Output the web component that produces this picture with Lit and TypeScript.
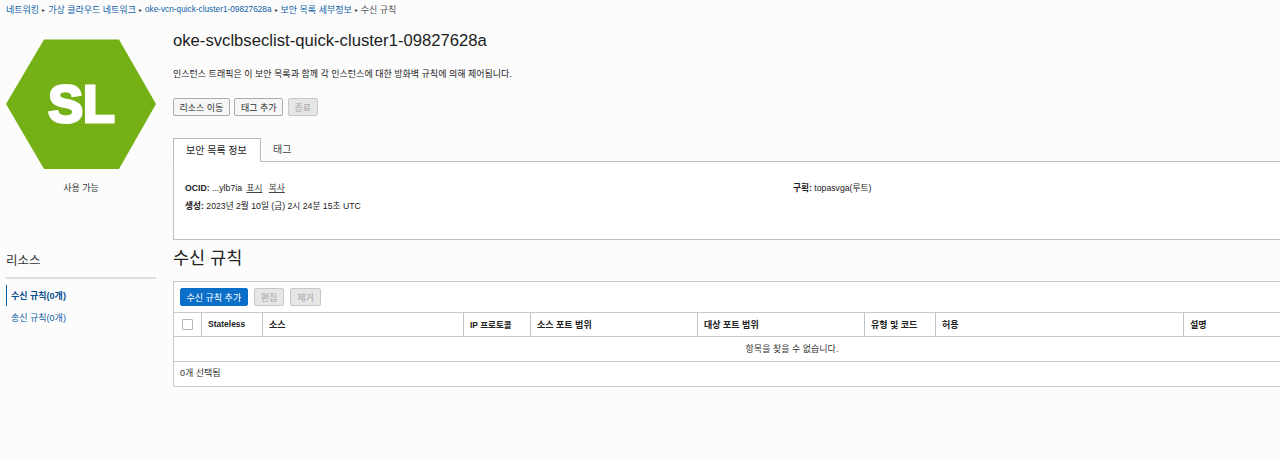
import { LitElement, html, css } from "lit";
import { customElement } from "lit/decorators.js";

const columns = [
  { label: "", width: 28 },
  { label: "Stateless", width: 61, cls: "latin" },
  { label: "소스", width: 201 },
  { label: "IP 프로토콜", width: 67, cls: "latin" },
  { label: "소스 포트 범위", width: 167 },
  { label: "대상 포트 범위", width: 167 },
  { label: "유형 및 코드", width: 71 },
  { label: "허용", width: 248 },
  { label: "설명", width: 227 },
];

@customElement("app-root")
export class AppRoot extends LitElement {
  static styles = css`
    :host {
      display: block;
      width: 1280px;
      height: 460px;
      overflow: hidden;
      background: #fcfcfc;
      color: #222;
      font-family: "Liberation Sans", "Noto Sans CJK KR", sans-serif;
      font-size: 9px;
    }
    .crumbs {
      display: flex;
      align-items: center;
      height: 19px;
      padding-left: 6px;
      gap: 3px;
      color: #555;
    }
    .crumbs a { color: #0f5ea8; }
    .crumbs a.id { font-size: 8.25px; }
    .crumbs .sep { font-size: 6px; color: #444; }
    .page { display: flex; }
    .side { width: 173px; flex: none; box-sizing: border-box; padding: 20px 17px 0 6px; }
    .hex { display: block; width: 150px; height: 130px; }
    .status { text-align: center; margin-top: 14px; height: 10px; line-height: 10px; color: #333; }
    .res-title { margin-top: 60px; font-size: 12.5px; line-height: 16px; color: #333; }
    .res-line { height: 2px; background: #dcdee2; margin: 8px 0 6px; }
    .nav { display: flex; flex-direction: column; gap: 1px; }
    .nav a {
      display: flex;
      align-items: center;
      height: 21px;
      padding-left: 5px;
      color: #0f5ea8;
    }
    .nav a.on {
      box-shadow: inset 1px 0 0 #0f5ea8;
      font-weight: 700;
      color: #0b4f91;
    }
    .main { width: 1238px; flex: none; }
    h1 {
      margin: 12px 0 0;
      font-size: 16.67px;
      line-height: 20px;
      font-weight: 400;
      color: #1c1c1c;
    }
    .desc { margin-top: 17px; line-height: 12px; color: #222; }
    .btns { display: flex; }
    .top-btns { margin-top: 18px; gap: 4.5px; }
    .btn {
      display: flex;
      align-items: center;
      justify-content: center;
      box-sizing: border-box;
      height: 18px;
      padding: 0 5.5px;
      border: 1px solid #a9abae;
      border-radius: 2px;
      background: #f6f6f6;
      color: #333;
      font: inherit;
    }
    .btn.off { background: #e6e6e6; border-color: #c6c8cb; color: #a5a5a5; padding: 0 6px; }
    .btn.primary { background: #0b6fca; border-color: #0b6fca; color: #fff; }
    .tabs { display: flex; margin-top: 22px; height: 24px; font-size: 10px; }
    .tab { display: flex; align-items: center; color: #444; padding: 0 0 4px 12px; box-sizing: border-box; }
    .tab.on {
      width: 88px;
      background: #fff;
      border: 1px solid #b9bbbe;
      border-bottom: none;
      padding-bottom: 3px;
      color: #222;
      position: relative;
      z-index: 1;
    }
    .panel {
      box-sizing: border-box;
      height: 79px;
      margin-top: -1px;
      background: #fff;
      border: 1px solid #bdbfc2;
      padding: 20px 11px 0;
      display: grid;
      grid-template-columns: 608px 1fr;
      grid-auto-rows: 18px;
      line-height: 12px;
      font-size: 8.7px;
      color: #222;
    }
    .panel b { font-weight: 700; }
    .panel u { color: #444; margin-left: 2px; }
    .panel u + u { margin-left: 4px; }
    h2 {
      margin: 7px 0 0;
      font-size: 17.5px;
      line-height: 22px;
      padding-bottom: 2px;
      font-weight: 400;
      color: #222;
    }
    .card {
      margin-top: 10px;
      background: #fff;
      border: 1px solid #c8cacd;
    }
    .bar { display: flex; gap: 6px; height: 30px; align-items: center; padding: 0 6px; box-sizing: border-box; }
    .row {
      display: flex;
      box-sizing: border-box;
      height: 25px;
      padding-bottom: 1px;
      border-top: 1px solid #c8cacd;
    }
    .row.head { height: 24px; padding-bottom: 0; }
    .th {
      box-sizing: border-box;
      flex: none;
      display: flex;
      align-items: center;
      padding: 0 0 1px 6px;
      font-weight: 700;
      color: #222;
      border-right: 1px solid #c0c2c6;
    }
    .th.latin { font-size: 8.5px; }
    .th:first-child { justify-content: center; padding: 0; }
    .th:last-child { border-right: none; }
    .box {
      width: 9px;
      height: 9px;
      border: 1px solid #b5b7ba;
      border-radius: 1px;
      background: #fff;
    }
    .empty { justify-content: center; align-items: center; color: #333; }
    .foot { align-items: center; padding: 0 0 3px 6px; color: #333; }
  `;

  render() {
    return html`
      <div class="crumbs">
        <a>네트워킹</a><span class="sep">▸</span>
        <a>가상 클라우드 네트워크</a><span class="sep">▸</span>
        <a class="id">oke-vcn-quick-cluster1-09827628a</a><span class="sep">▸</span>
        <a>보안 목록 세부정보</a><span class="sep">▸</span>
        <span>수신 규칙</span>
      </div>
      <div class="page">
        <aside class="side">
          <svg class="hex" viewBox="0 0 150 130">
            <polygon points="38,0.5 113,0.5 150,65 113,130 38,130 0,65" fill="#75b016"></polygon>
            <text x="75.5" y="83" text-anchor="middle" fill="#fff" stroke="#fff" stroke-width="3"
              font-size="52" font-weight="700" font-family="'Liberation Sans', sans-serif">SL</text>
          </svg>
          <div class="status">사용 가능</div>
          <div class="res-title">리소스</div>
          <div class="res-line"></div>
          <nav class="nav">
            <a class="on">수신 규칙(0개)</a>
            <a>송신 규칙(0개)</a>
          </nav>
        </aside>
        <main class="main">
          <h1>oke-svclbseclist-quick-cluster1-09827628a</h1>
          <div class="desc">인스턴스 트래픽은 이 보안 목록과 함께 각 인스턴스에 대한 방화벽 규칙에 의해 제어됩니다.</div>
          <div class="btns top-btns">
            <button class="btn">리소스 이동</button>
            <button class="btn">태그 추가</button>
            <button class="btn off">종료</button>
          </div>
          <div class="tabs">
            <div class="tab on">보안 목록 정보</div>
            <div class="tab">태그</div>
          </div>
          <section class="panel">
            <div><b>OCID:</b> ...ylb7ia <u>표시</u> <u>복사</u></div>
            <div><b>구획:</b> topasvga(루트)</div>
            <div><b>생성:</b> 2023년 2월 10일 (금) 2시 24분 15초 UTC</div>
          </section>
          <h2>수신 규칙</h2>
          <section class="card">
            <div class="bar">
              <button class="btn primary">수신 규칙 추가</button>
              <button class="btn off">편집</button>
              <button class="btn off">제거</button>
            </div>
            <div class="row head">
              ${columns.map(
                (c, i) => html`<div class="th ${c.cls ?? ""}" style="width:${c.width}px">
                  ${i === 0 ? html`<span class="box"></span>` : c.label}
                </div>`
              )}
            </div>
            <div class="row empty">항목을 찾을 수 없습니다.</div>
            <div class="row foot">0개 선택됨</div>
          </section>
        </main>
      </div>
    `;
  }
}
